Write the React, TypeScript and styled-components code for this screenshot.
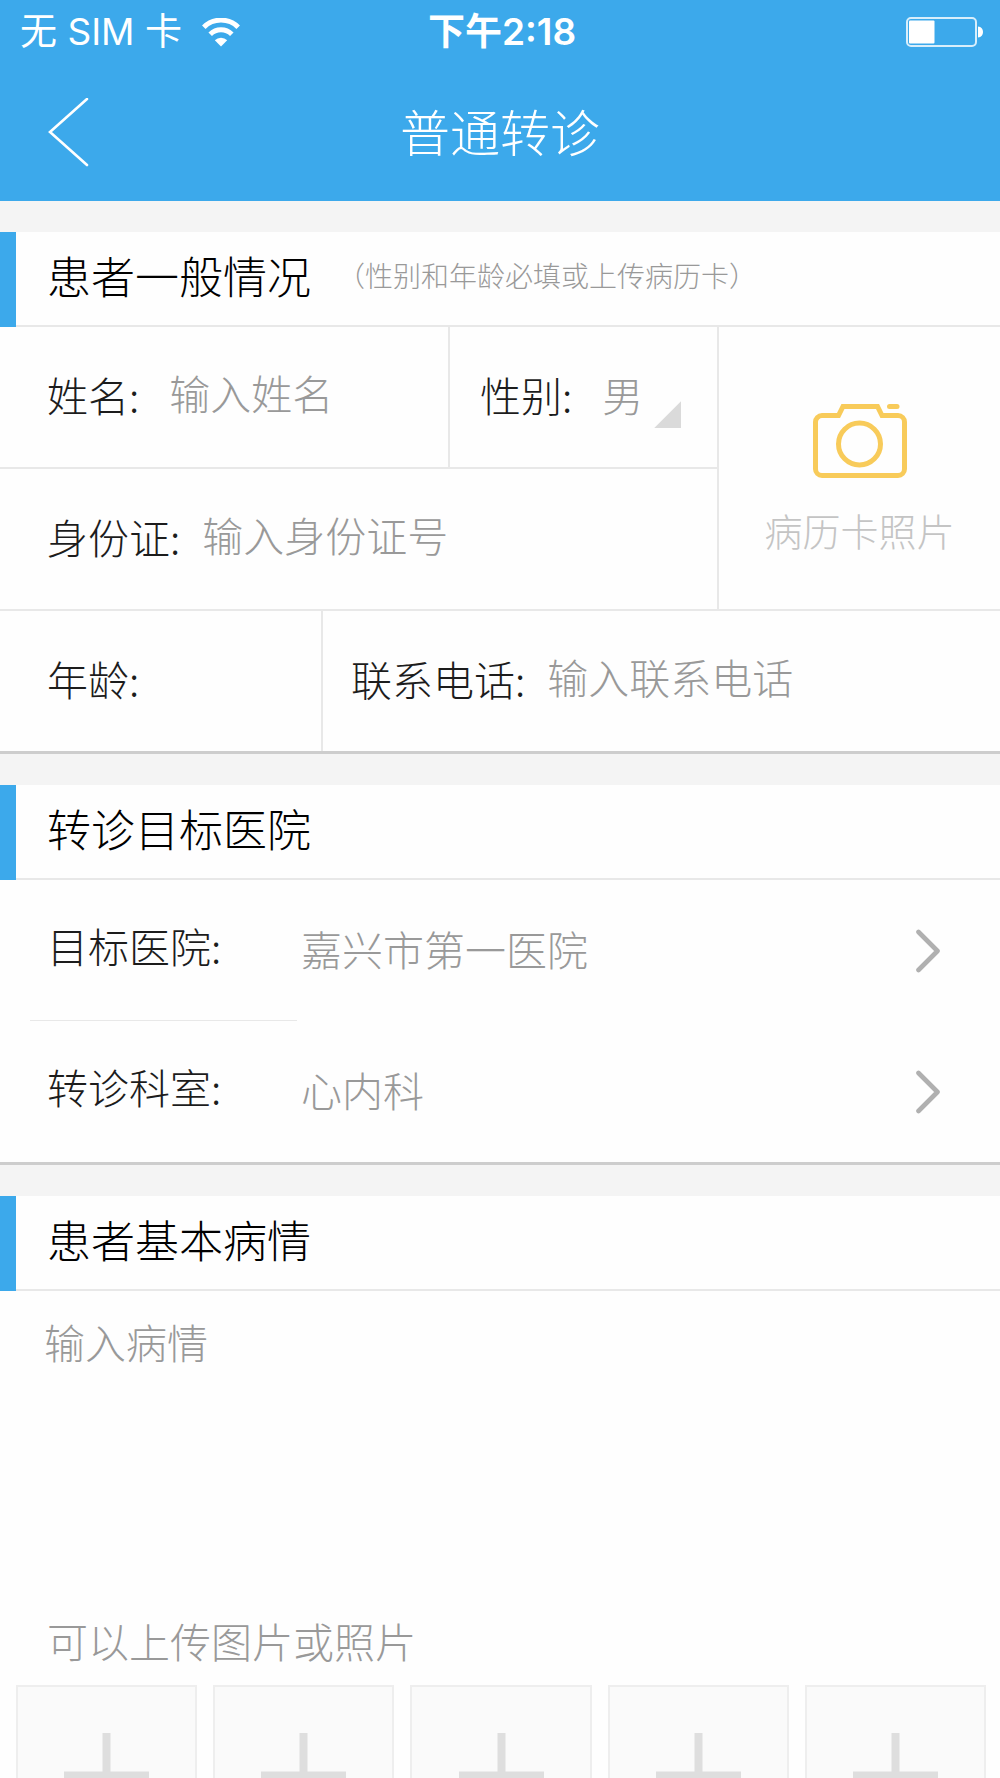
import React from "react";
import styled, { createGlobalStyle } from "styled-components";

const color = {
  brand: "#3ca9eb",
  page: "#f4f4f4",
  surface: "#fefefe",
  line: "#e8e8e8",
  edge: "#cdcdcd",
  title: "#000000",
  label: "#1c1c1c",
  muted: "#999999",
  faint: "#c4c4c4",
  camera: "#f8cb5a",
};

const GlobalStyle = createGlobalStyle`
  *, *::before, *::after { box-sizing: border-box; }
  html, body, #root { height: 100%; }
  body { margin: 0; background: ${color.page}; }
  body, button, input, select, textarea {
    font-family: "Noto Sans CJK SC", "Noto Sans", sans-serif;
    font-weight: 300;
  }
  button, input, select, textarea {
    margin: 0;
    padding: 0;
    border: 0;
    border-radius: 0;
    background: none;
    color: inherit;
    outline-color: ${color.brand};
  }
  button { cursor: pointer; }
`;

const Screen = styled.div`
  display: flex;
  flex-direction: column;
  height: 100vh;
`;

const Header = styled.header`
  flex: none;
  background: ${color.brand};
  color: #fff;
`;

const StatusBar = styled.div`
  display: grid;
  grid-template-columns: 1fr auto 1fr;
  align-items: center;
  height: 64px;
  padding: 0 16px 0 20px;
  font-family: Inter, "Noto Sans CJK SC", sans-serif;
  font-size: 37px;
  font-weight: 400;
  line-height: 64px;
`;

const Carrier = styled.div`
  display: flex;
  align-items: center;
  gap: 20px;
`;

const Clock = styled.time`
  font-weight: 600;
`;

const BatteryIcon = styled.svg`
  justify-self: end;
`;

const NavBar = styled.div`
  display: grid;
  grid-template-columns: 1fr auto 1fr;
  align-items: center;
  height: 137px;
`;

const BackButton = styled.button`
  justify-self: start;
  display: flex;
  padding: 20px 44px;
`;

const PageTitle = styled.h1`
  margin: 0;
  padding-bottom: 6px;
  font-size: 50px;
  line-height: 72px;
  font-weight: 300;
`;

const Content = styled.main`
  flex: 1;
  min-height: 0;
  overflow-y: auto;
  scrollbar-width: none;
  display: flex;
  flex-direction: column;
  gap: 31px;
  padding-top: 31px;
`;

const Section = styled.section`
  flex: none;
  background: ${color.surface};
  border-bottom: 3px solid ${color.edge};
`;

const SectionHead = styled.div`
  display: flex;
  align-items: center;
  gap: 26px;
  height: 95px;
  padding: 0 0 10px 31px;
  border-left: 16px solid ${color.brand};
  box-shadow: inset 0 -2px ${color.line};
`;

const SectionTitle = styled.h2`
  margin: 0;
  font-size: 44px;
  line-height: 64px;
  font-weight: 300;
  color: ${color.title};
`;

const SectionHint = styled.span`
  font-size: 28px;
  line-height: 40px;
  color: ${color.muted};
`;

const Split = styled.div<{ $columns: string }>`
  display: grid;
  grid-template-columns: ${(p) => p.$columns};
`;

const Cell = styled.div<{ $inset?: number; $gap?: number; $right?: boolean; $bottom?: boolean }>`
  display: flex;
  align-items: center;
  gap: ${(p) => p.$gap ?? 22}px;
  min-width: 0;
  height: ${(p) => (p.$bottom ? 142 : 140)}px;
  padding: 0 0 6px ${(p) => p.$inset ?? 47}px;
  border: 0 solid ${color.line};
  border-right-width: ${(p) => (p.$right ? 2 : 0)}px;
  border-bottom-width: ${(p) => (p.$bottom ? 2 : 0)}px;
`;

const Label = styled.label`
  flex: none;
  font-size: 41px;
  line-height: 60px;
  color: ${color.label};
`;

const TextInput = styled.input`
  flex: 1;
  min-width: 0;
  height: 64px;
  padding-bottom: 4px;
  font-size: 41px;
  line-height: 60px;
  color: ${color.muted};
  &::placeholder { color: ${color.muted}; opacity: 1; }
`;

const SelectBox = styled.div`
  display: flex;
  align-items: flex-end;
  gap: 10px;
`;

const Select = styled.select`
  appearance: none;
  width: 42px;
  height: 68px;
  font-size: 41px;
  line-height: 60px;
  color: ${color.muted};
`;

const SelectCorner = styled.span`
  width: 27px;
  height: 27px;
  background: #dadada;
  clip-path: polygon(100% 0, 100% 100%, 0 100%);
`;

const PhotoButton = styled.button`
  display: flex;
  flex-direction: column;
  align-items: center;
  justify-content: center;
  gap: 24px;
  padding-top: 26px;
  border-bottom: 2px solid ${color.line};
  font-size: 38px;
  line-height: 56px;
  color: ${color.faint};
`;

const Picker = styled.button`
  display: grid;
  grid-template-columns: 254px 1fr auto;
  align-items: center;
  width: 100%;
  height: 141px;
  padding: 0 60px 0 47px;
  text-align: left;
  font-size: 41px;
  line-height: 60px;
`;

const PickerLabel = styled.span`
  padding-bottom: 12px;
  color: ${color.label};
`;

const PickerValue = styled.span`
  padding-bottom: 6px;
  color: ${color.muted};
`;

const PickerDivider = styled.hr`
  width: 267px;
  height: 1px;
  margin: -1px 0 0 30px;
  border: 0;
  background: ${color.line};
`;

const Notes = styled.textarea`
  display: block;
  width: 100%;
  height: 318px;
  padding: 20px 44px;
  resize: none;
  font-size: 41px;
  line-height: 60px;
  color: ${color.muted};
  &::placeholder { color: ${color.muted}; opacity: 1; }
`;

const UploadHint = styled.p`
  margin: 0;
  padding: 0 47px 14px;
  font-size: 41px;
  line-height: 62px;
  color: ${color.muted};
`;

const Tiles = styled.div`
  display: grid;
  grid-template-columns: repeat(5, 1fr);
  gap: 16px;
  padding: 0 14px 32px 16px;
`;

const Tile = styled.button`
  display: flex;
  align-items: center;
  justify-content: center;
  aspect-ratio: 1;
  background: #fafafa;
  border: 2px solid #eeeeee;
`;

const WifiIcon = () => (
  <svg width="38" height="29" viewBox="0 0 38 29" fill="none" stroke="#fff" aria-hidden="true">
    <path d="M1.8 9.2a24.4 24.4 0 0 1 34.4 0" strokeWidth="5" />
    <path d="M8.2 16.2a15.3 15.3 0 0 1 21.6 0" strokeWidth="5" />
    <path d="M12.8 22.2a8.8 8.8 0 0 1 12.4 0L19 28.6z" fill="#fff" stroke="none" />
  </svg>
);

const Battery = () => (
  <BatteryIcon width="78" height="32" viewBox="0 0 78 32" aria-hidden="true">
    <rect x="1" y="2" width="69" height="28" rx="4" fill="none" stroke="#fff" strokeOpacity="0.8" strokeWidth="2" />
    <rect x="3" y="4.500" width="25.500" height="23" rx="1" fill="#fff" />
    <path d="M72 10.500c3.400.3 5 2.600 5 5.500s-1.600 5.200-5 5.500z" fill="#fff" />
  </BatteryIcon>
);

const BackIcon = () => (
  <svg width="46" height="70" viewBox="0 0 46 70" fill="none" stroke="#fff" strokeWidth="2.6" strokeLinecap="round" aria-hidden="true">
    <path d="M43 1L6 34l37 33" />
  </svg>
);

const CameraIcon = () => (
  <svg width="94" height="74" viewBox="0 0 94 74" fill="none" stroke={color.camera} strokeWidth="5" aria-hidden="true">
    <path d="M9 11.500h16.500L30 2.500h34.500l4.500 9H85a6.500 6.500 0 0 1 6.500 6.500v47a6.500 6.500 0 0 1-6.500 6.500H9A6.500 6.500 0 0 1 2.500 65V18A6.500 6.500 0 0 1 9 11.500z" />
    <ellipse cx="46.500" cy="40" rx="21" ry="21" />
    <path d="M76.500 2.500h7.500" strokeLinecap="round" />
  </svg>
);

const ChevronIcon = () => (
  <svg width="24" height="44" viewBox="0 0 24 44" fill="none" stroke="#b0b0b0" strokeWidth="4.600" strokeLinecap="round" strokeLinejoin="round" aria-hidden="true">
    <path d="M2.500 3L21.500 22l-19 19" />
  </svg>
);

const PlusIcon = () => (
  <svg width="85" height="85" viewBox="0 0 85 85" fill="none" stroke="#dedede" strokeWidth="8" aria-hidden="true">
    <path d="M42.500 0v85M0 42.500h85" />
  </svg>
);

export default function App() {
  return (
    <Screen>
      <GlobalStyle />
      <Header>
        <StatusBar>
          <Carrier>
            <span>无 SIM 卡</span>
            <WifiIcon />
          </Carrier>
          <Clock dateTime="14:18">下午2:18</Clock>
          <Battery />
        </StatusBar>
        <NavBar>
          <BackButton type="button" aria-label="返回">
            <BackIcon />
          </BackButton>
          <PageTitle>普通转诊</PageTitle>
        </NavBar>
      </Header>

      <Content>
        <Section>
          <SectionHead>
            <SectionTitle>患者一般情况</SectionTitle>
            <SectionHint>（性别和年龄必填或上传病历卡）</SectionHint>
          </SectionHead>
          <Split $columns="719fr 281fr">
            <div>
              <Split $columns="450fr 269fr">
                <Cell $gap={30} $right $bottom>
                  <Label htmlFor="name">姓名:</Label>
                  <TextInput id="name" placeholder="输入姓名" />
                </Cell>
                <Cell $inset={30} $gap={30} $right $bottom>
                  <Label htmlFor="gender">性别:</Label>
                  <SelectBox>
                    <Select id="gender" defaultValue="男">
                      <option>男</option>
                      <option>女</option>
                    </Select>
                    <SelectCorner />
                  </SelectBox>
                </Cell>
              </Split>
              <Cell $right $bottom>
                <Label htmlFor="idcard">身份证:</Label>
                <TextInput id="idcard" placeholder="输入身份证号" />
              </Cell>
            </div>
            <PhotoButton type="button">
              <CameraIcon />
              病历卡照片
            </PhotoButton>
          </Split>
          <Split $columns="323fr 677fr">
            <Cell $right>
              <Label htmlFor="age">年龄:</Label>
              <TextInput id="age" inputMode="numeric" />
            </Cell>
            <Cell $inset={28}>
              <Label htmlFor="phone">联系电话:</Label>
              <TextInput id="phone" type="tel" placeholder="输入联系电话" />
            </Cell>
          </Split>
        </Section>

        <Section>
          <SectionHead>
            <SectionTitle>转诊目标医院</SectionTitle>
          </SectionHead>
          <Picker type="button">
            <PickerLabel>目标医院:</PickerLabel>
            <PickerValue>嘉兴市第一医院</PickerValue>
            <ChevronIcon />
          </Picker>
          <PickerDivider />
          <Picker type="button">
            <PickerLabel>转诊科室:</PickerLabel>
            <PickerValue>心内科</PickerValue>
            <ChevronIcon />
          </Picker>
        </Section>

        <Section>
          <SectionHead>
            <SectionTitle id="condition-title">患者基本病情</SectionTitle>
          </SectionHead>
          <Notes aria-labelledby="condition-title" placeholder="输入病情" />
          <UploadHint>可以上传图片或照片</UploadHint>
          <Tiles>
            {[1, 2, 3, 4, 5].map((n) => (
              <Tile key={n} type="button" aria-label={`上传图片 ${n}`}>
                <PlusIcon />
              </Tile>
            ))}
          </Tiles>
        </Section>
      </Content>
    </Screen>
  );
}
